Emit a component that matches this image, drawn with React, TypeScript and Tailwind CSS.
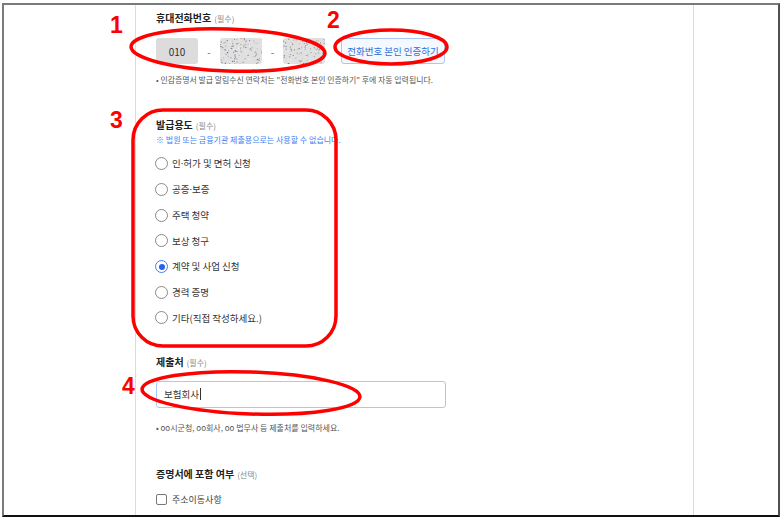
import { useState } from "react";

const PURPOSES: [string, string?][] = [
  ["인", "허가 및 면허 신청"],
  ["공증", "보증"],
  ["주택 청약"],
  ["보상 청구"],
  ["계약 및 사업 신청"],
  ["경력 증명"],
  ["기타(직접 작성하세요.)"],
];

// cheap deterministic noise for the blurred phone digits
function noiseDots(seed: number, count: number, w: number, h: number) {
  const dots: { x: number; y: number; c: string }[] = [];
  let s = seed;
  const rand = () => {
    s = (s * 9301 + 49297) % 233280;
    return s / 233280;
  };
  const colors = ["#8a8f99", "#6b7a99", "#b08a7a", "#9aa6b8", "#5c6270", "#c7b49a", "#f2f2f2"];
  for (let i = 0; i < count; i++) {
    dots.push({
      x: rand() * w,
      y: rand() * h,
      c: colors[Math.floor(rand() * colors.length)],
    });
  }
  return dots;
}

function BlurBox({ seed }: { seed: number }) {
  const dots = noiseDots(seed, 110, 42, 26);
  return (
    <div className="h-[26px] w-[42px] overflow-hidden rounded-[3px] bg-[#e0e0e0]">
      <svg width="42" height="26" viewBox="0 0 42 26">
        {dots.map((d, i) => (
          <rect key={i} x={d.x} y={d.y} width="1" height="1" fill={d.c} />
        ))}
      </svg>
    </div>
  );
}

function Label({ title, note }: { title: string; note: string }) {
  return (
    <div className="flex items-baseline gap-[3px] leading-none">
      <span className="text-[10px] font-bold text-[#222]">{title}</span>
      <span className="text-[8px] text-[#888]">{note}</span>
    </div>
  );
}

export default function App() {
  const [purpose, setPurpose] = useState(4);

  return (
    <div
      className="relative h-[518px] w-[781px] bg-white"
      style={{ fontFamily: '"Noto Sans CJK KR", "Noto Sans", sans-serif' }}
    >
      <div className="absolute left-[2px] top-[3px] h-[514px] w-[778px] border-t-2 border-l-2 border-r-2 border-b-2 border-t-[#7a7a7a] border-l-[#7a7a7a] border-r-[#505050] border-b-[#111]">
        <div className="ml-[131px] h-full w-[559px] border-x border-[#dcdcdc] pl-[20px]">
          {/* 휴대전화번호 */}
          <div className="pt-[8px]">
            <Label title="휴대전화번호" note="(필수)" />
            <div className="mt-[15px] flex items-center">
              <div className="flex h-[26px] w-[42px] items-center justify-center rounded-[3px] bg-[#dcdcdc] text-[10px] text-[#333]">
                010
              </div>
              <span className="w-[22px] text-center text-[10px] text-[#666]">-</span>
              <BlurBox seed={17} />
              <span className="w-[21px] text-center text-[10px] text-[#666]">-</span>
              <BlurBox seed={53} />
              <button className="ml-[16px] flex h-[26px] w-[104px] items-center justify-center rounded-[3px] border border-[#a9c8f5] bg-[#f4f8ff] text-[9.5px] text-[#2f6fd6]">
                전화번호 본인 인증하기
              </button>
            </div>
            <p className="mt-[12px] text-[7.9px] leading-none text-[#555]">
              • 인감증명서 발급 알림수신 연락처는 "전화번호 본인 인증하기" 후에 자동 입력됩니다.
            </p>
          </div>

          {/* 발급용도 */}
          <div className="pt-[36px]">
            <Label title="발급용도" note="(필수)" />
            <p className="mt-[6px] text-[8px] leading-none text-[#3b82f6]">
              ※ 법원 또는 금융기관 제출용으로는 사용할 수 없습니다.
            </p>
            <div className="mt-[7px] flex flex-col">
              {PURPOSES.map(([a, b], i) => (
                <label key={a + (b ?? "")} className="-ml-px flex h-[25.7px] cursor-pointer items-center gap-[4px]">
                  <span
                    onClick={() => setPurpose(i)}
                    className={`flex h-[13px] w-[13px] items-center justify-center rounded-full border ${
                      purpose === i ? "border-[#3b82f6]" : "border-[#8a8a8a]"
                    }`}
                  >
                    {purpose === i && <span className="h-[6px] w-[6px] rounded-full bg-[#2563eb]" />}
                  </span>
                  <span className="text-[9.5px] text-[#333]">
                    {a}
                    {b !== undefined && (
                      <>
                        <span style={{ fontFamily: '"Noto Sans", sans-serif' }}>·</span>
                        {b}
                      </>
                    )}
                  </span>
                </label>
              ))}
            </div>
          </div>

          {/* 제출처 */}
          <div className="pt-[26px]">
            <Label title="제출처" note="(필수)" />
            <div className="mt-[14px] flex h-[27px] w-[290px] items-center rounded-[3px] border border-[#a9c8f5] px-[7px] text-[9.5px] text-[#333]">
              보험회사<span className="ml-px h-[12px] w-px bg-[#333]" />
            </div>
            <p className="mt-[16px] text-[8px] leading-none text-[#555]">
              • oo시군청, oo회사, oo 법무사 등 제출처를 입력하세요.
            </p>
          </div>

          {/* 증명서에 포함 여부 */}
          <div className="pt-[37px]">
            <Label title="증명서에 포함 여부" note="(선택)" />
            <label className="mt-[14px] flex items-center gap-[5px]">
              <span className="h-[11px] w-[11px] rounded-[2px] border border-[#777]" />
              <span className="text-[9px] text-[#444]">주소이동사항</span>
            </label>
          </div>
        </div>
      </div>

      {/* red annotations */}
      <svg className="pointer-events-none absolute inset-0" width="781" height="518">
        <ellipse cx="228" cy="50" rx="97" ry="21" fill="none" stroke="#f00" strokeWidth="3.5" transform="rotate(2 228 50)" />
        <ellipse cx="391" cy="47" rx="56" ry="17" fill="none" stroke="#f00" strokeWidth="3.5" />
        <rect x="133" y="110" width="203" height="236" rx="30" fill="none" stroke="#f00" strokeWidth="3.5" />
        <ellipse cx="251" cy="393" rx="109" ry="21" fill="none" stroke="#f00" strokeWidth="3.5" transform="rotate(2 251 393)" />
      </svg>
      <span className="absolute left-[110px] top-[14px] text-[23px] font-bold leading-none text-[#f00]" style={{ fontFamily: '"Liberation Sans", sans-serif' }}>1</span>
      <span className="absolute left-[327px] top-[9px] text-[23px] font-bold leading-none text-[#f00]" style={{ fontFamily: '"Liberation Sans", sans-serif' }}>2</span>
      <span className="absolute left-[110px] top-[109px] text-[23px] font-bold leading-none text-[#f00]" style={{ fontFamily: '"Liberation Sans", sans-serif' }}>3</span>
      <span className="absolute left-[122px] top-[375px] text-[23px] font-bold leading-none text-[#f00]" style={{ fontFamily: '"Liberation Sans", sans-serif' }}>4</span>
    </div>
  );
}
